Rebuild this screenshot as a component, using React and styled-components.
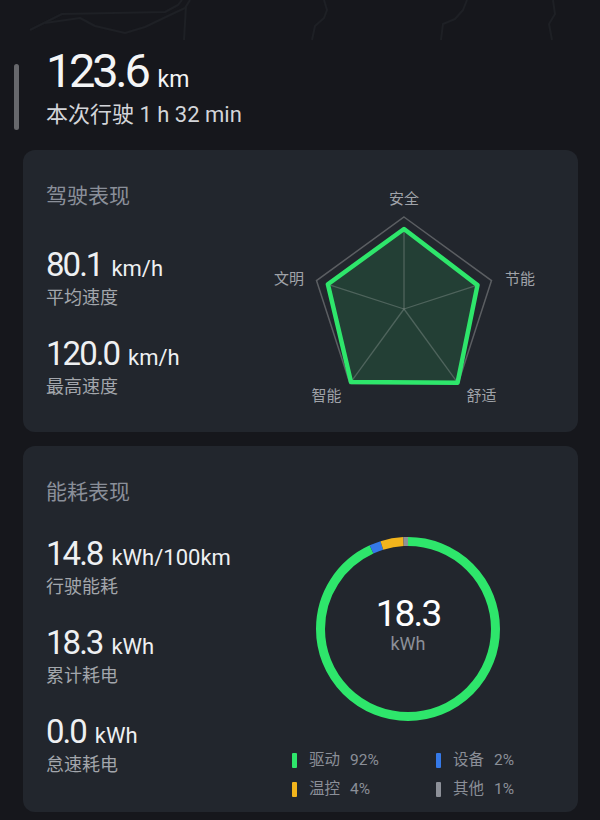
import styled, { createGlobalStyle } from "styled-components";

const GlobalStyle = createGlobalStyle`
  html, body {
    margin: 0;
    padding: 0;
    background: #16171c;
  }
  body {
    font-family: Roboto, "Noto Sans CJK SC", sans-serif;
    -webkit-font-smoothing: antialiased;
  }
`

const Page = styled.div`
  position: relative;
  width: 600px;
  min-height: 820px;
  box-sizing: border-box;
  padding: 43px 22px 8px 23px;
  overflow: hidden;
`

const MapTrace = styled.svg`
  position: absolute;
  top: 0;
  left: 0;
  pointer-events: none;
`

const ScrollThumb = styled.div`
  position: absolute;
  left: 14px;
  top: 64px;
  width: 5px;
  height: 66px;
  border-radius: 3px;
  background: #67686c;
`

const Header = styled.header`
  position: relative;
  padding-left: 23px;
  margin-bottom: 20px;
`

const Distance = styled.div`
  font-size: 47px;
  line-height: 56px;
  letter-spacing: -0.07em;
  color: #f4f5f6;

  small {
    font-size: 23px;
    line-height: 1;
    letter-spacing: 0;
    margin-left: 10px;
  }
`

const TripTime = styled.div`
  font-size: 22px;
  line-height: 30px;
  margin-top: 1px;
  color: #d3d5d9;
`

const Card = styled.section`
  display: flex;
  align-items: flex-start;
  background: #22262d;
  border-radius: 12px;
  padding: ${p => p.$pad};
  & + & {
    margin-top: 14px;
  }
`

const Column = styled.div`
  flex: 1;
  display: flex;
  flex-direction: column;
  padding-bottom: ${p => p.$bottom || 0}px;
`

const Title = styled.h2`
  margin: 0 0 ${p => p.$gap}px;
  font-size: 21px;
  line-height: 28px;
  font-weight: 400;
  color: #8a8f99;
`

const Stat = styled.div`
  & + & {
    margin-top: 25px;
  }
`

const Value = styled.div`
  font-size: 33px;
  line-height: 36px;
  letter-spacing: -0.06em;
  color: #eef0f2;

  span {
    font-size: 22px;
    line-height: 1;
    letter-spacing: 0;
    margin-left: 9px;
  }
`

const Label = styled.div`
  margin-top: 2px;
  font-size: 18px;
  line-height: 26px;
  color: #a3a6ac;
`

const Radar = styled.svg`
  flex: none;
  margin: -12px 0 -12px;
  overflow: visible;

  text {
    font-family: "Noto Sans CJK SC", sans-serif;
    font-size: 15px;
    fill: #a0a3a9;
  }
`

const Side = styled.div`
  flex: none;
  width: 270px;
  display: flex;
  flex-direction: column;
  padding-top: 51px;
`

const DonutBox = styled.div`
  position: relative;
  width: 200px;
  height: 200px;
  margin-left: 18px;
`

const DonutCenter = styled.div`
  position: absolute;
  inset: 0;
  display: flex;
  flex-direction: column;
  align-items: center;
  justify-content: center;
  padding-bottom: 10px;
`

const DonutValue = styled.div`
  font-size: 37px;
  line-height: 40px;
  letter-spacing: -0.05em;
  color: #ffffff;
`

const DonutUnit = styled.div`
  font-size: 18px;
  line-height: 20px;
  color: #8b8f98;
`

const Legend = styled.div`
  display: grid;
  grid-template-columns: 144px 1fr;
  row-gap: 1px;
  margin-top: 17px;
  margin-left: 2px;
`

const LegendItem = styled.div`
  display: flex;
  align-items: center;
  font-size: 15.5px;
  line-height: 28px;
  color: #8b8f98;

  i {
    width: 5px;
    height: 15px;
    border-radius: 1px;
    margin-right: 12px;
    background: ${p => p.$color};
  }

  b {
    font-weight: 400;
    margin-left: 10px;
  }
`

const axes = ["安全", "节能", "舒适", "智能", "文明"]
const scores = [0.87, 0.84, 0.99, 0.98, 0.87]
const CX = 144, CY = 139, R = 92

function point(i, r) {
  const a = (-90 + 72 * i) * Math.PI / 180
  return [CX + r * Math.cos(a), CY + r * Math.sin(a)]
}

function RadarChart() {
  const outer = axes.map((_, i) => point(i, R).join(",")).join(" ")
  const inner = scores.map((s, i) => point(i, R * s).join(",")).join(" ")
  return (
    <Radar width="300" height="240" viewBox="0 0 300 240">
      <polygon points={outer} fill="none" stroke="#5b5e62" strokeWidth="1.5" />
      <polygon points={inner} fill="rgba(46,230,107,0.13)" />
      {axes.map((_, i) => {
        const [x, y] = point(i, R * scores[i])
        return <line key={i} x1={CX} y1={CY} x2={x} y2={y} stroke="rgba(160,170,165,0.35)" strokeWidth="1.3" />
      })}
      <polygon points={inner} fill="none" stroke="#2ee66b" strokeWidth="4.5" strokeLinejoin="round" />
      <text x={CX} y="34" textAnchor="middle">安全</text>
      <text x="245" y="113.5">节能</text>
      <text x="206.5" y="231">舒适</text>
      <text x="51.5" y="231">智能</text>
      <text x="14" y="113.5">文明</text>
    </Radar>
  )
}

const parts = [
  { name: "驱动", pct: "92%", color: "#2ee66b", from: 0, to: 0.93 },
  { name: "设备", pct: "2%", color: "#3579e8", from: 0.93, to: 0.95 },
  { name: "温控", pct: "4%", color: "#f2b41c", from: 0.95, to: 0.99 },
  { name: "其他", pct: "1%", color: "#8d9098", from: 0.99, to: 1 },
]

function Donut() {
  const r = 87.5
  const c = 2 * Math.PI * r
  return (
    <DonutBox>
      <svg width="200" height="200" viewBox="0 0 200 200">
        <g transform="rotate(-90 100 100)">
          {parts.map(p => (
            <circle
              key={p.name}
              cx="100" cy="100" r={r}
              fill="none"
              stroke={p.color}
              strokeWidth="9"
              strokeDasharray={`${(p.to - p.from) * c} ${c}`}
              strokeDashoffset={-p.from * c}
            />
          ))}
        </g>
      </svg>
      <DonutCenter>
        <DonutValue>18.3</DonutValue>
        <DonutUnit>kWh</DonutUnit>
      </DonutCenter>
    </DonutBox>
  )
}

export default function App() {
  return (
    <>
      <GlobalStyle />
      <Page>
        <MapTrace width="600" height="45" viewBox="0 0 600 45">
          <g fill="none" stroke="#1e2025" strokeWidth="2" strokeLinejoin="round">
            <path d="M30 30 L62 14 L165 12 L178 5 L182 0" />
            <path d="M45 23 L80 18 L95 26 L125 33 L145 27 L170 15 L185 8 L190 0" />
            <path d="M186 6 L184 40" />
            <path d="M324 0 L327 10 L324 18 L315 26 L312 40" />
            <path d="M467 0 L463 10 L455 19 L443 24 L441 40" />
            <path d="M553 0 L555 14 L549 24 L552 40" />
          </g>
        </MapTrace>
        <ScrollThumb />
        <Header>
          <Distance>123.6<small>km</small></Distance>
          <TripTime>本次行驶 1 h 32 min</TripTime>
        </Header>

        <Card $pad="32px 18px 32px 23px">
          <Column>
            <Title $gap={37}>驾驶表现</Title>
            <Stat>
              <Value>80.1<span>km/h</span></Value>
              <Label>平均速度</Label>
            </Stat>
            <Stat>
              <Value>120.0<span>km/h</span></Value>
              <Label>最高速度</Label>
            </Stat>
          </Column>
          <RadarChart />
        </Card>

        <Card $pad="32px 18px 8px 23px">
          <Column $bottom={26}>
            <Title $gap={30}>能耗表现</Title>
            <Stat>
              <Value>14.8<span>kWh/100km</span></Value>
              <Label>行驶能耗</Label>
            </Stat>
            <Stat>
              <Value>18.3<span>kWh</span></Value>
              <Label>累计耗电</Label>
            </Stat>
            <Stat>
              <Value>0.0<span>kWh</span></Value>
              <Label>怠速耗电</Label>
            </Stat>
          </Column>
          <Side>
            <Donut />
            <Legend>
              {parts.map(p => (
                <LegendItem key={p.name} $color={p.color}>
                  <i />{p.name}<b>{p.pct}</b>
                </LegendItem>
              ))}
            </Legend>
          </Side>
        </Card>
      </Page>
    </>
  )
}
